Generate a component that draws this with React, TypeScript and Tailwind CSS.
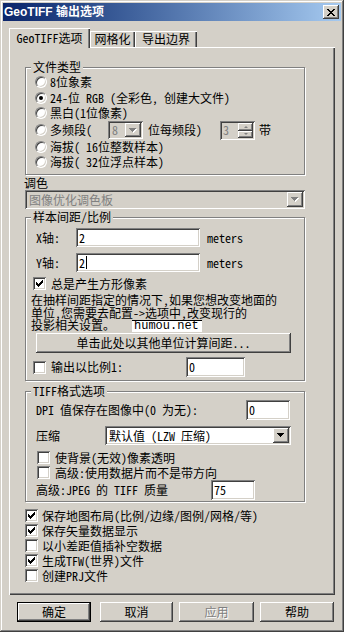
import React from 'react';

const RAISED =
  'shadow-[inset_-1px_-1px_#404040,inset_1px_1px_#ffffff,inset_-2px_-2px_#808080,inset_2px_2px_#d4d0c8]';
const SUNKEN =
  'shadow-[inset_1px_1px_#808080,inset_-1px_-1px_#ffffff,inset_2px_2px_#404040,inset_-2px_-2px_#d4d0c8]';

const ARROW = 'M0 0h7v1H0z M1 1h5v1H1z M2 2h3v1H2z M3 3h1v1H3z';

function Arrow({ disabled = false }: { disabled?: boolean }) {
  return (
    <svg width="8" height="5" viewBox="0 0 8 5" shapeRendering="crispEdges">
      {disabled && <path d={ARROW} fill="#ffffff" transform="translate(1 1)" />}
      <path d={ARROW} fill={disabled ? '#808080' : '#000000'} />
    </svg>
  );
}

function Radio({ checked = false }: { checked?: boolean }) {
  return (
    <span className="flex w-[12px] h-[12px] shrink-0 items-center justify-center rounded-full border border-t-[#808080] border-l-[#808080] border-r-white border-b-white bg-white shadow-[inset_1px_1px_#404040,inset_-1px_-1px_#d4d0c8]">
      {checked && <span className="h-[4px] w-[4px] rounded-full bg-black" />}
    </span>
  );
}

function Check({ checked = false }: { checked?: boolean }) {
  return (
    <span className={`flex w-[13px] h-[13px] shrink-0 items-center justify-center bg-white ${SUNKEN}`}>
      {checked && (
        <svg width="7" height="7" viewBox="0 0 7 7" shapeRendering="crispEdges">
          <path
            d="M6 0h1v1H6z M5 1h2v1H5z M0 2h1v1H0z M4 2h3v1H4z M0 3h2v1H0z M3 3h3v1H3z M0 4h5v1H0z M1 5h3v1H1z M2 6h1v1H2z"
            fill="#000"
          />
        </svg>
      )}
    </span>
  );
}

function Field({ value, className = '', caret = false }: { value: string; className?: string; caret?: boolean }) {
  return (
    <div className={`flex items-center bg-white pl-[3px] ${SUNKEN} ${className}`}>
      <span>{value}</span>
      {caret && <span className="ml-px h-[13px] w-px bg-black" />}
    </div>
  );
}

function Btn({
  children,
  className = '',
  disabled = false,
  isDefault = false,
}: {
  children: React.ReactNode;
  className?: string;
  disabled?: boolean;
  isDefault?: boolean;
}) {
  return (
    <div
      className={`flex h-[20px] shrink-0 items-center justify-center ${RAISED} ${
        isDefault ? 'border border-black' : ''
      } ${disabled ? 'text-[#808080] [text-shadow:1px_1px_0_#ffffff]' : ''} ${className}`}
    >
      {children}
    </div>
  );
}

function Group({ title, children, className = '' }: { title: string; children: React.ReactNode; className?: string }) {
  return (
    <fieldset className={`w-[280px] border border-[#808080] shadow-[inset_1px_1px_#ffffff,1px_1px_#ffffff] ${className}`}>
      <legend className="ml-[5px] h-[14px] bg-[#d4d0c8] px-[2px] leading-[14px]">{title}</legend>
      {children}
    </fieldset>
  );
}

const bottomChecks: [string, boolean][] = [
  ['保存地图布局(比例/边缘/图例/网格/等)', true],
  ['保存矢量数据显示', true],
  ['以小差距值插补空数据', false],
  ['生成TFW(世界)文件', true],
  ['创建PRJ文件', false],
];

export default function App() {
  return (
    <div className="flex h-[632px] w-[344px] flex-col overflow-hidden bg-[#d4d0c8] p-[3px] text-[12px] leading-[14px] text-black font-['Noto_Sans_Mono_CJK_SC','Noto_Sans_CJK_SC',monospace] shadow-[inset_-1px_-1px_#404040,inset_1px_1px_#d4d0c8,inset_-2px_-2px_#808080,inset_2px_2px_#ffffff]">
      {/* title bar */}
      <div className="flex h-[18px] shrink-0 items-center bg-linear-to-r from-[#0a246a] to-[#a6caf0] pl-[1px] pr-[2px]">
        <span className="font-bold text-white font-['Liberation_Sans','Noto_Sans_CJK_SC',sans-serif]">
          GeoTIFF 输出选项
        </span>
        <div className={`ml-auto flex h-[14px] w-[16px] items-center justify-center bg-[#d4d0c8] ${RAISED}`}>
          <svg width="8" height="7" viewBox="0 0 8 7" shapeRendering="crispEdges">
            <path
              d="M0 0h2v1H0z M6 0h2v1H6z M1 1h2v1H1z M5 1h2v1H5z M2 2h4v1H2z M3 3h2v1H3z M2 4h4v1H2z M1 5h2v1H1z M5 5h2v1H5z M0 6h2v1H0z M6 6h2v1H6z"
              fill="#000"
            />
          </svg>
        </div>
      </div>

      {/* tabs */}
      <div className="ml-[6px] mt-[7px] flex h-[19px] shrink-0 items-end">
        <div className="relative z-10 -mb-px flex h-[20px] w-[81px] items-center justify-center bg-[#d4d0c8] shadow-[inset_1px_1px_#ffffff,inset_-1px_0_#404040,inset_-2px_0_#808080]">
          GeoTIFF选项
        </div>
        <div className="flex h-[16px] w-[45px] items-center justify-center shadow-[inset_1px_1px_#ffffff,inset_-1px_0_#404040,inset_-2px_0_#808080]">
          网格化
        </div>
        <div className="flex h-[16px] w-[62px] items-center justify-center shadow-[inset_1px_1px_#ffffff,inset_-1px_0_#404040,inset_-2px_0_#808080]">
          导出边界
        </div>
      </div>

      {/* panel */}
      <div className="ml-[6px] flex h-[548px] w-[326px] shrink-0 flex-col pl-[16px] pt-[13px] shadow-[inset_1px_1px_#ffffff,inset_-1px_-1px_#404040,inset_-2px_-2px_#808080]">
        <Group title="文件类型">
          <div className="flex flex-col pb-[4px] pl-[9px]">
            <div className="flex h-[16px] items-center gap-[3px]">
              <Radio />
              <span>8位象素</span>
            </div>
            <div className="flex h-[15px] items-center gap-[3px]">
              <Radio checked />
              <span>24-位 RGB (全彩色, 创建大文件)</span>
            </div>
            <div className="flex h-[16px] items-center gap-[3px]">
              <Radio />
              <span>黑白(1位像素)</span>
            </div>
            <div className="flex h-[18px] items-center">
              <Radio />
              <span className="ml-[3px] w-[58px]">多频段(</span>
              <div className={`flex h-[18px] w-[35px] items-center p-[2px] ${SUNKEN}`}>
                <span className="flex-1 pl-[2px] text-[#808080]">8</span>
                <div className={`flex h-[14px] w-[16px] items-center justify-center ${RAISED}`}>
                  <Arrow disabled />
                </div>
              </div>
              <span className="ml-[5px] w-[72px]">位每频段)</span>
              <div className={`flex h-[19px] w-[35px] items-center p-[2px] ${SUNKEN}`}>
                <span className="flex-1 pl-[1px] text-[#808080]">3</span>
                <div className="flex h-[15px] w-[15px] flex-col">
                  <div className={`flex h-[8px] items-center justify-center ${RAISED}`}>
                    <span className="h-0 w-0 border-x-[2px] border-b-[2px] border-x-transparent border-b-[#808080]" />
                  </div>
                  <div className={`flex h-[7px] items-center justify-center ${RAISED}`}>
                    <span className="h-0 w-0 border-x-[2px] border-t-[2px] border-x-transparent border-t-[#808080]" />
                  </div>
                </div>
              </div>
              <span className="ml-[4px]">带</span>
            </div>
            <div className="flex h-[15px] items-center gap-[3px]">
              <Radio />
              <span>海拔( 16位整数样本)</span>
            </div>
            <div className="flex h-[16px] items-center gap-[3px]">
              <Radio />
              <span>海拔( 32位浮点样本)</span>
            </div>
          </div>
        </Group>

        <div className="-ml-px flex h-[15px] items-center">调色</div>
        <div className={`flex h-[19px] w-[280px] items-center p-[2px] ${SUNKEN}`}>
          <span className="flex-1 pl-[2px] text-[#808080]">图像优化调色板</span>
          <div className={`flex h-[15px] w-[16px] items-center justify-center ${RAISED}`}>
            <Arrow disabled />
          </div>
        </div>

        <Group title="样本间距/比例" className="mt-px">
          <div className="flex flex-col pb-[3px]">
            <div className="mt-[4px] flex h-[19px] items-center pl-[10px]">
              <span className="w-[40px]">X轴:</span>
              <Field value="2" className="h-[19px] w-[124px]" />
              <span className="ml-[7px]">meters</span>
            </div>
            <div className="mt-[6px] flex h-[19px] items-center pl-[10px]">
              <span className="w-[40px]">Y轴:</span>
              <Field value="2" caret className="h-[19px] w-[124px]" />
              <span className="ml-[7px]">meters</span>
            </div>
            <div className="mt-[5px] flex h-[13px] items-center gap-[5px] pl-[7px]">
              <Check checked />
              <span>总是产生方形像素</span>
            </div>
            <div className="relative mt-[4px] flex flex-col whitespace-nowrap pl-[5px] leading-[12px]">
              <span className="h-[12.5px]">在抽样间距指定的情况下,如果您想改变地面的</span>
              <span className="h-[12.5px]">单位,您需要去配置-&gt;选项中,改变现行的</span>
              <div className="flex h-[12px] items-start">
                <span className="w-[101px]">投影相关设置。</span>
                <span className="mt-[1px] flex h-[12px] w-[70px] items-center border-t border-black bg-white pl-[2px] leading-[11px] font-['Liberation_Mono',monospace]">
                  humou.net
                </span>
              </div>
            </div>
            <Btn className="ml-[10px] mt-[2px] w-[255px]">单击此处以其他单位计算间距...</Btn>
            <div className="mt-[4px] flex h-[20px] items-center pl-[7px]">
              <Check />
              <span className="ml-[5px] w-[135px]">输出以比例1:</span>
              <Field value="0" className="h-[20px] w-[59px]" />
            </div>
          </div>
        </Group>

        <Group title="TIFF格式选项" className="mt-[3px]">
          <div className="flex flex-col pb-px">
            <div className="mt-[2px] flex h-[20px] items-center pl-[10px]">
              <span className="w-[210px]">DPI 值保存在图像中(0 为无):</span>
              <Field value="0" className="h-[20px] w-[44px]" />
            </div>
            <div className="mt-[6px] flex h-[19px] items-center pl-[10px]">
              <span className="w-[69px]">压缩</span>
              <div className={`flex h-[19px] w-[186px] items-center bg-white p-[2px] ${SUNKEN}`}>
                <span className="flex-1 pl-[2px]">默认值 (LZW 压缩)</span>
                <div className={`flex h-[15px] w-[16px] items-center justify-center bg-[#d4d0c8] ${RAISED}`}>
                  <Arrow />
                </div>
              </div>
            </div>
            <div className="mt-[6px] flex h-[13px] items-center gap-[5px] pl-[11px]">
              <Check />
              <span>使背景(无效)像素透明</span>
            </div>
            <div className="mt-[2px] flex h-[13px] items-center gap-[5px] pl-[11px]">
              <Check />
              <span>高级:使用数据片而不是带方向</span>
            </div>
            <div className="mt-px flex h-[20px] items-center pl-[10px]">
              <span className="w-[175px]">高级:JPEG 的 TIFF 质量</span>
              <Field value="75" className="h-[20px] w-[44px]" />
            </div>
          </div>
        </Group>

        <div className="mt-[6px] flex flex-col">
          {bottomChecks.map(([label, on]) => (
            <div key={label} className="flex h-[15px] items-center gap-[4px]">
              <Check checked={on} />
              <span>{label}</span>
            </div>
          ))}
        </div>
      </div>

      {/* buttons */}
      <div className="mt-[7px] flex shrink-0">
        <Btn isDefault className="ml-[14px] w-[74px]">确定</Btn>
        <Btn className="ml-[9px] w-[73px]">取消</Btn>
        <Btn disabled className="ml-[6px] w-[75px]">应用</Btn>
        <Btn className="ml-[6px] w-[74px]">帮助</Btn>
      </div>
    </div>
  );
}
